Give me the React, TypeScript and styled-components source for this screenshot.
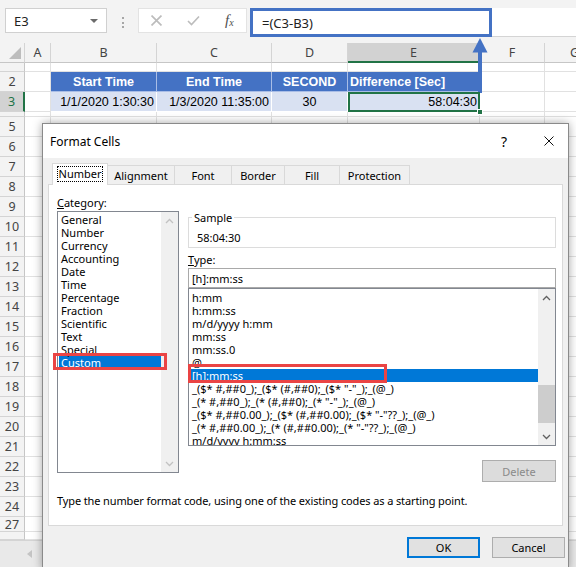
import React from 'react';
import styled, { createGlobalStyle } from 'styled-components';

const UI = `"Noto Sans", "Open Sans", sans-serif`;
const CELLFONT = `"Liberation Sans", Arial, sans-serif`;

const GlobalStyle = createGlobalStyle`
  html, body { margin: 0; padding: 0; background: #fff; }
  body { font-family: ${UI}; }
  * { box-sizing: border-box; }
`;

const Page = styled.div`
  position: relative;
  width: 576px;
  height: 567px;
  overflow: hidden;
  display: flex;
  flex-direction: column;
  background: #fff;
`;

/* ---------------- formula bar ---------------- */
const FormulaBar = styled.div`
  flex: none;
  height: 43px;
  display: flex;
  align-items: flex-start;
  padding-top: 8px;
  background: #f3f3f3;
`;

const NameBox = styled.div`
  margin-left: 5px;
  width: 102px;
  height: 25px;
  display: flex;
  align-items: center;
  justify-content: space-between;
  padding: 0 8px;
  background: #fff;
  border: 1px solid #d0d0d0;
  font: 13px ${UI};
  color: #222;
`;

const Caret = styled.span`
  width: 0;
  height: 0;
  border-left: 4px solid transparent;
  border-right: 4px solid transparent;
  border-top: 4px solid #6b6b6b;
`;

const Grip = styled.div`
  margin: 9px 0 0 15px;
  width: 2px;
  height: 11px;
  background: repeating-linear-gradient(to bottom, #a6a6a6 0 2px, transparent 2px 4.5px);
`;

const FuncBox = styled.div`
  margin-left: 14px;
  width: 109px;
  height: 25px;
  display: flex;
  align-items: center;
  justify-content: space-around;
  background: #fff;
  border: 1px solid #e3e3e3;
`;

const FxLabel = styled.span`
  font: italic 15px "Liberation Serif", serif;
  color: #505050;
  & > sub {
    font-size: 10px;
    vertical-align: -1px;
  }
`;

const FormulaField = styled.div`
  margin-left: 3px;
  flex: 1;
  height: 29px;
  display: flex;
  background: #fff;
  border-bottom: 1px solid #d4d4d4;
`;

const FormulaHighlight = styled.div`
  width: 242px;
  height: 29px;
  display: flex;
  align-items: center;
  padding-left: 9px;
  border: 3px solid #4472c4;
  font: 13px ${UI};
  color: #222;
`;

/* ---------------- sheet grid ---------------- */
const Sheet = styled.div<{ $cols: string; $rows: string }>`
  flex: none;
  display: grid;
  grid-template-columns: ${(p) => p.$cols};
  grid-template-rows: ${(p) => p.$rows};
  width: 605px;
`;

const Corner = styled.div`
  display: flex;
  align-items: flex-end;
  justify-content: flex-end;
  padding: 0 3px 3px 0;
  background: #f3f3f3;
  border-right: 1px solid #d4d4d4;
  border-bottom: 1px solid #c6c6c6;
`;

const CornerTri = styled.span`
  width: 0;
  height: 0;
  border-left: 12px solid transparent;
  border-bottom: 12px solid #bdbdbd;
`;

const ColHead = styled.div<{ $sel?: boolean }>`
  display: flex;
  align-items: center;
  justify-content: center;
  background: ${(p) => (p.$sel ? '#d2d2d2' : '#f3f3f3')};
  border-right: 1px solid #d4d4d4;
  border-bottom: ${(p) => (p.$sel ? '2px solid #217346' : '1px solid #c6c6c6')};
  font: 12.5px ${UI};
  color: #444;
`;

const RowHead = styled.div<{ $sel?: boolean }>`
  display: flex;
  align-items: center;
  justify-content: center;
  overflow: hidden;
  background: ${(p) => (p.$sel ? '#d2d2d2' : '#f3f3f3')};
  border-right: ${(p) => (p.$sel ? '2px solid #217346' : '1px solid #c6c6c6')};
  border-bottom: 1px solid #d4d4d4;
  font: 12.5px ${UI};
  color: ${(p) => (p.$sel ? '#217346' : '#444')};
`;

type Tone = 'plain' | 'head' | 'data';
type Align = 'left' | 'center' | 'right';

const toneBg: Record<Tone, string> = { plain: '#fff', head: '#4472c4', data: '#d9e1f2' };
const toneLine: Record<Tone, string> = { plain: '#e1e1e1', head: '#a9bde6', data: '#fff' };
const justify: Record<Align, string> = { left: 'flex-start', center: 'center', right: 'flex-end' };

const Cell = styled.div<{ $tone: Tone; $align: Align; $active?: boolean }>`
  position: relative;
  display: flex;
  align-items: center;
  justify-content: ${(p) => justify[p.$align]};
  padding: 0 2px;
  white-space: nowrap;
  background: ${(p) => toneBg[p.$tone]};
  border-right: 1px solid ${(p) => toneLine[p.$tone]};
  border-bottom: 1px solid ${(p) => toneLine[p.$tone]};
  font: ${(p) => (p.$tone === 'head' ? 'bold' : 'normal')} 12.5px ${CELLFONT};
  color: ${(p) => (p.$tone === 'head' ? '#fff' : '#000')};
  ${(p) => (p.$active ? `outline: 2px solid #217346; outline-offset: -2px; z-index: 2;` : '')}
`;

const FillHandle = styled.span`
  position: absolute;
  right: -4px;
  bottom: -4px;
  width: 6px;
  height: 6px;
  background: #217346;
  border: 1px solid #fff;
`;

const BottomBar = styled.div`
  flex: none;
  height: 27px;
  display: flex;
  align-items: center;
  padding-left: 27px;
  background: #e9e9e9;
  border-top: 1px solid #d4d4d4;
`;

const ArrowOverlay = styled.svg`
  position: absolute;
  left: 471px;
  top: 36px;
`;

/* ---------------- dialog ---------------- */
const Dialog = styled.div`
  position: absolute;
  left: 42px;
  top: 123px;
  width: 527px;
  height: 447px;
  display: flex;
  flex-direction: column;
  background: #f0f0f0;
  border: 1px solid #8a8a8a;
  box-shadow: 0 0 9px rgba(0, 0, 0, 0.35);
  font: 11px ${UI};
  color: #000;
`;

const TitleBar = styled.div`
  flex: none;
  height: 34px;
  display: flex;
  align-items: center;
  padding-left: 7px;
  background: #fff;
`;

const Title = styled.span`
  flex: 1;
  font: 12px ${UI};
`;

const CaptionBtn = styled.div<{ $w: number }>`
  width: ${(p) => p.$w}px;
  height: 34px;
  display: flex;
  align-items: center;
  justify-content: center;
  font: 14px ${UI};
`;

const Body = styled.div`
  flex: 1;
  display: flex;
  flex-direction: column;
  padding: 0 5px;
`;

const TabRow = styled.div`
  position: relative;
  z-index: 1;
  height: 19px;
  margin-top: 7px;
  display: flex;
  align-items: flex-end;
  padding-left: 4px;
`;

const Tab = styled.div<{ $w: number; $active?: boolean }>`
  width: ${(p) => p.$w}px;
  height: ${(p) => (p.$active ? 22 : 19)}px;
  margin-bottom: ${(p) => (p.$active ? -1 : 0)}px;
  margin-left: -1px;
  &:first-child {
    margin-left: 0;
  }
  display: flex;
  align-items: center;
  justify-content: center;
  background: ${(p) => (p.$active ? '#fff' : '#f0f0f0')};
  border: 1px solid #d9d9d9;
  border-bottom: none;
  padding-bottom: ${(p) => (p.$active ? 2 : 0)}px;
`;

const FocusRing = styled.span`
  line-height: 14px;
  padding: 0 1px;
  outline: 1px dotted #000;
`;

const Panel = styled.div`
  height: 342px;
  display: flex;
  flex-direction: column;
  padding: 11px 6px 0 8px;
  background: #fff;
  border: 1px solid #d9d9d9;
`;

const Columns = styled.div`
  display: grid;
  grid-template-columns: 122px 368px;
  column-gap: 9px;
  align-items: start;
`;

const Column = styled.div`
  display: flex;
  flex-direction: column;
`;

const Label = styled.div<{ $mt?: number }>`
  margin-top: ${(p) => p.$mt ?? 0}px;
  line-height: 13px;
`;

const ListBox = styled.div<{ $h: number; $mt?: number }>`
  position: relative;
  height: ${(p) => p.$h}px;
  margin-top: ${(p) => p.$mt ?? 0}px;
  display: flex;
  background: #fff;
  border: 1px solid #828790;
`;

const Items = styled.div<{ $pt: number }>`
  flex: 1;
  overflow: hidden;
  padding: ${(p) => p.$pt}px 0 0 1px;
`;

const Item = styled.div<{ $sel?: boolean }>`
  height: 13px;
  line-height: 13px;
  padding-left: 2px;
  white-space: nowrap;
  background: ${(p) => (p.$sel ? '#0078d7' : 'transparent')};
  color: ${(p) => (p.$sel ? '#fff' : '#000')};
`;

const ScrollBar = styled.div`
  flex: none;
  width: 17px;
  display: flex;
  flex-direction: column;
  background: #f0f0f0;
  position: relative;
  z-index: 1;
`;

const ScrollBtn = styled.div`
  flex: none;
  height: 17px;
  display: flex;
  align-items: center;
  justify-content: center;
`;

const Track = styled.div`
  flex: 1;
`;

const Thumb = styled.div<{ $top: number; $h: number }>`
  margin-top: ${(p) => p.$top}px;
  height: ${(p) => p.$h}px;
  background: #cdcdcd;
`;

const RedBox = styled.div<{ $l: number; $t: number; $w: number; $h: number }>`
  position: absolute;
  z-index: 2;
  left: ${(p) => p.$l}px;
  top: ${(p) => p.$t}px;
  width: ${(p) => p.$w}px;
  height: ${(p) => p.$h}px;
  border: 3px solid #ea4444;
  pointer-events: none;
`;

const SampleField = styled.fieldset`
  margin: 15px 0 0 0;
  padding: 0 0 3px 3px;
  min-width: 0;
  border: 1px solid #dcdcdc;
`;

const Legend = styled.legend`
  margin: 0;
  padding: 0 2px;
  line-height: 13px;
`;

const SampleValue = styled.div`
  margin-top: 7px;
  padding-left: 5px;
  line-height: 13px;
`;

const TextInput = styled.div`
  margin-top: 2px;
  height: 20px;
  display: flex;
  align-items: center;
  padding-left: 3px;
  background: #fff;
  border: 1px solid #a9a9a9;
`;

const Button = styled.div<{ $w: number; $mode?: 'default' | 'disabled' }>`
  width: ${(p) => p.$w}px;
  height: ${(p) => (p.$mode === 'disabled' ? 22 : 21)}px;
  display: flex;
  align-items: center;
  justify-content: center;
  background: ${(p) => (p.$mode === 'disabled' ? '#dcdcdc' : '#e1e1e1')};
  border: ${(p) => (p.$mode === 'default' ? '2px solid #0078d7' : '1px solid #adadad')};
  color: ${(p) => (p.$mode === 'disabled' ? '#8a8a8a' : '#000')};
`;

const DeleteRow = styled.div`
  margin-top: 14px;
  display: flex;
  justify-content: flex-end;
`;

const Hint = styled.div`
  margin-top: 12px;
  line-height: 13px;
  white-space: nowrap;
  letter-spacing: -0.12px;
`;

const ButtonRow = styled.div`
  margin: 11px -2px 0 0;
  display: flex;
  justify-content: flex-end;
  gap: 12px;
`;

/* ---------------- icons ---------------- */
const Chevron = ({ up, color }: { up?: boolean; color: string }) => (
  <svg width="9" height="6" viewBox="0 0 9 6">
    <polyline
      points={up ? '1,5 4.5,1.5 8,5' : '1,1 4.5,4.5 8,1'}
      fill="none"
      stroke={color}
      strokeWidth="1.3"
    />
  </svg>
);

const CrossIcon = ({ size, color, w }: { size: number; color: string; w: number }) => (
  <svg width={size} height={size} viewBox="0 0 10 10">
    <path d="M0.5 0.5 L9.5 9.5 M9.5 0.5 L0.5 9.5" stroke={color} strokeWidth={w} fill="none" />
  </svg>
);

const CheckIcon = () => (
  <svg width="13" height="11" viewBox="0 0 13 11">
    <path d="M1 6 L4.5 9.5 L12 1.5" stroke="#bcbcbc" strokeWidth="1.6" fill="none" />
  </svg>
);

/* ---------------- data ---------------- */
const COLS = [25, 26, 106, 115, 76, 132, 65, 60];
const LETTERS = ['A', 'B', 'C', 'D', 'E', 'F', 'G'];

type RowDef = { n: string; h: number; sel?: boolean };
const ROWS: RowDef[] = [
  { n: '', h: 9 },
  { n: '2', h: 20 },
  { n: '3', h: 20, sel: true },
  { n: '', h: 5 },
  ...Array.from({ length: 20 }, (_, i) => ({ n: String(i + 5), h: 20 })),
  { n: '27', h: 15 },
  { n: '', h: 8 },
];

type CellDef = { text: string; align: Align };
const TABLE: Record<string, { tone: Tone; cells: CellDef[] }> = {
  '2': {
    tone: 'head',
    cells: [
      { text: 'Start Time', align: 'center' },
      { text: 'End Time', align: 'center' },
      { text: 'SECOND', align: 'center' },
      { text: 'Difference [Sec]', align: 'left' },
    ],
  },
  '3': {
    tone: 'data',
    cells: [
      { text: '1/1/2020 1:30:30', align: 'right' },
      { text: '1/3/2020 11:35:00', align: 'right' },
      { text: '30', align: 'center' },
      { text: '58:04:30', align: 'right' },
    ],
  },
};

const TABS = [
  { label: 'Number', w: 56 },
  { label: 'Alignment', w: 68 },
  { label: 'Font', w: 58 },
  { label: 'Border', w: 54 },
  { label: 'Fill', w: 56 },
  { label: 'Protection', w: 71 },
];

const CATEGORIES = [
  'General',
  'Number',
  'Currency',
  'Accounting',
  'Date',
  'Time',
  'Percentage',
  'Fraction',
  'Scientific',
  'Text',
  'Special',
  'Custom',
];

const TYPES = [
  'h:mm',
  'h:mm:ss',
  'm/d/yyyy h:mm',
  'mm:ss',
  'mm:ss.0',
  '@',
  '[h]:mm:ss',
  '_($* #,##0_);_($* (#,##0);_($* "-"_);_(@_)',
  '_(* #,##0_);_(* (#,##0);_(* "-"_);_(@_)',
  '_($* #,##0.00_);_($* (#,##0.00);_($* "-"??_);_(@_)',
  '_(* #,##0.00_);_(* (#,##0.00);_(* "-"??_);_(@_)',
  'm/d/yyyy h:mm:ss',
];

function SheetGrid() {
  const cols = COLS.map((c) => `${c}px`).join(' ');
  const rows = ['20px', ...ROWS.map((r) => `${r.h}px`)].join(' ');
  return (
    <Sheet $cols={cols} $rows={rows}>
      <Corner>
        <CornerTri />
      </Corner>
      {LETTERS.map((l) => (
        <ColHead key={l} $sel={l === 'E'}>
          {l}
        </ColHead>
      ))}
      {ROWS.map((r, ri) => {
        const table = TABLE[r.n];
        return (
          <React.Fragment key={ri}>
            <RowHead $sel={r.sel}>{r.n}</RowHead>
            {LETTERS.map((l, ci) => {
              const tc = table && ci >= 1 && ci <= 4 ? table.cells[ci - 1] : null;
              const active = r.n === '3' && l === 'E';
              return (
                <Cell
                  key={l}
                  $tone={tc ? table.tone : 'plain'}
                  $align={tc ? tc.align : 'left'}
                  $active={active}
                >
                  {tc ? tc.text : null}
                  {active ? <FillHandle /> : null}
                </Cell>
              );
            })}
          </React.Fragment>
        );
      })}
    </Sheet>
  );
}

function FormatCellsDialog() {
  return (
    <Dialog>
      <TitleBar>
        <Title>Format Cells</Title>
        <CaptionBtn $w={52}>?</CaptionBtn>
        <CaptionBtn $w={38}>
          <CrossIcon size={10} color="#111" w={1} />
        </CaptionBtn>
      </TitleBar>
      <Body>
        <TabRow>
          {TABS.map((t, i) => (
            <Tab key={t.label} $w={t.w} $active={i === 0}>
              {i === 0 ? <FocusRing>{t.label}</FocusRing> : t.label}
            </Tab>
          ))}
        </TabRow>
        <Panel>
          <Columns>
            <Column>
              <Label>
                <u>C</u>ategory:
              </Label>
              <ListBox $h={262} $mt={2}>
                <Items $pt={1}>
                  {CATEGORIES.map((c) => (
                    <Item key={c} $sel={c === 'Custom'}>
                      {c}
                    </Item>
                  ))}
                </Items>
                <ScrollBar>
                  <ScrollBtn>
                    <Chevron up color="#c2c2c2" />
                  </ScrollBtn>
                  <Track />
                  <ScrollBtn>
                    <Chevron color="#c2c2c2" />
                  </ScrollBtn>
                </ScrollBar>
                <RedBox $l={-5} $t={141} $w={114} $h={17} />
              </ListBox>
            </Column>
            <Column>
              <SampleField>
                <Legend>Sample</Legend>
                <SampleValue>58:04:30</SampleValue>
              </SampleField>
              <Label $mt={5}>
                <u>T</u>ype:
              </Label>
              <TextInput>[h]:mm:ss</TextInput>
              <ListBox $h={158}>
                <Items $pt={2}>
                  {TYPES.map((t) => (
                    <Item key={t} $sel={t === '[h]:mm:ss'}>
                      {t}
                    </Item>
                  ))}
                </Items>
                <ScrollBar>
                  <ScrollBtn>
                    <Chevron up color="#606060" />
                  </ScrollBtn>
                  <Track>
                    <Thumb $top={79} $h={38} />
                  </Track>
                  <ScrollBtn>
                    <Chevron color="#606060" />
                  </ScrollBtn>
                </ScrollBar>
                <RedBox $l={-1} $t={75} $w={199} $h={19} />
              </ListBox>
              <DeleteRow>
                <Button $w={74} $mode="disabled">
                  Delete
                </Button>
              </DeleteRow>
            </Column>
          </Columns>
          <Hint>Type the number format code, using one of the existing codes as a starting point.</Hint>
        </Panel>
        <ButtonRow>
          <Button $w={73} $mode="default">
            OK
          </Button>
          <Button $w={73}>Cancel</Button>
        </ButtonRow>
      </Body>
    </Dialog>
  );
}

export default function App() {
  return (
    <Page>
      <GlobalStyle />
      <FormulaBar>
        <NameBox>
          E3
          <Caret />
        </NameBox>
        <Grip />
        <FuncBox>
          <CrossIcon size={11} color="#bcbcbc" w={1.5} />
          <CheckIcon />
          <FxLabel>
            f<sub>x</sub>
          </FxLabel>
        </FuncBox>
        <FormulaField>
          <FormulaHighlight>=(C3-B3)</FormulaHighlight>
        </FormulaField>
      </FormulaBar>
      <SheetGrid />
      <BottomBar>
        <svg width="5" height="8" viewBox="0 0 5 8">
          <path d="M5 0 L0 4 L5 8 Z" fill="#c4c4c4" />
        </svg>
      </BottomBar>
      <ArrowOverlay width="18" height="58" viewBox="0 0 18 58">
        <path d="M9 2 L16.5 16.5 L1.5 16.5 Z" fill="#4472c4" />
        <rect x="7" y="16" width="4" height="41" fill="#4472c4" />
      </ArrowOverlay>
      <FormatCellsDialog />
    </Page>
  );
}
